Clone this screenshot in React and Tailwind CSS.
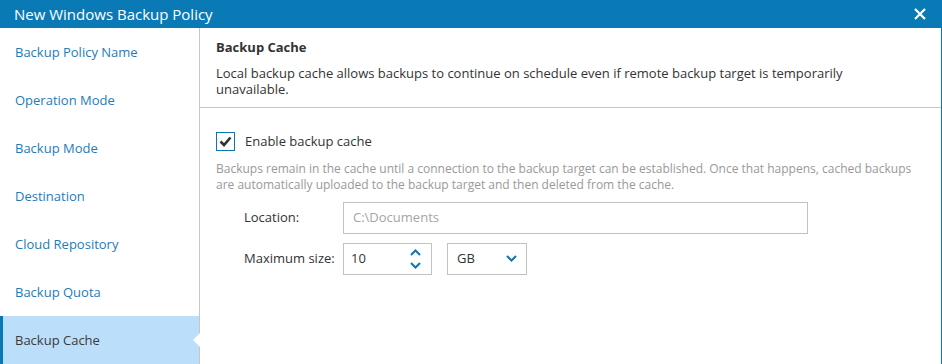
import { useState } from 'react'

const steps = [
  'Backup Policy Name',
  'Operation Mode',
  'Backup Mode',
  'Destination',
  'Cloud Repository',
  'Backup Quota',
  'Backup Cache',
]

function Sidebar({ active }) {
  return (
    <div className="w-[200px] shrink-0 border-r border-[#c6c6c6]">
      {steps.map((s) => {
        const on = s === active
        return (
          <div
            key={s}
            className={
              on
                ? 'relative flex h-12 items-center border-l-[3px] border-[#0a78b2] bg-[#bbdffb] pl-3 pt-[2px] text-[#3a3a3a]'
                : 'flex h-12 items-center pl-[15px] pt-[2px] text-[#1f7bb8]'
            }
          >
            {s}
            {on && (
              <span className="absolute right-[-1px] top-1/2 h-0 w-0 -translate-y-1/2 border-y-[7px] border-r-[7px] border-y-transparent border-r-white" />
            )}
          </div>
        )
      })}
    </div>
  )
}

function Checkbox({ checked, onChange }) {
  return (
    <button
      onClick={onChange}
      className="flex h-[19px] w-[19px] items-center justify-center border border-[#0a78b2] bg-white"
    >
      {checked && (
        <svg width="13" height="11" viewBox="0 0 13 11">
          <path d="M1.5 5.5 L5 9 L11.5 1.5" fill="none" stroke="#333" strokeWidth="2.6" />
        </svg>
      )}
    </button>
  )
}

export default function App() {
  const [enabled, setEnabled] = useState(true)

  return (
    <div
      className="flex h-[364px] w-[942px] flex-col overflow-hidden bg-white text-[13px]"
      style={{ fontFamily: '"Open Sans", "Liberation Sans", sans-serif' }}
    >
      <div className="flex h-[28px] shrink-0 items-center justify-between bg-[#0a7ab6] pl-[14px] pr-[16px] text-white">
        <span className="text-[15px]">New Windows Backup Policy</span>
        <svg width="12" height="12" viewBox="0 0 12 12">
          <path d="M1 1 L11 11 M11 1 L1 11" stroke="#fff" strokeWidth="2.2" />
        </svg>
      </div>

      <div className="flex flex-1 border-r border-[#0a7ab6]">
        <Sidebar active="Backup Cache" />

        <div className="flex-1">
          <div className="border-b border-[#c6c6c6] pb-[10px] pl-4 pr-[30px] pt-[10px] text-[#333]">
            <h2 className="font-bold leading-[18px]">Backup Cache</h2>
            <p className="mt-[9px] leading-[16px]">
              Local backup cache allows backups to continue on schedule even if remote backup target is temporarily
              unavailable.
            </p>
          </div>

          <div className="px-4 pt-[24px]">
            <label className="flex items-center gap-[10px] text-[#333]">
              <Checkbox checked={enabled} onChange={() => setEnabled(!enabled)} />
              Enable backup cache
            </label>
            <p className="mt-[9px] text-[12px] leading-[16px] text-[#999]">
              Backups remain in the cache until a connection to the backup target can be established. Once that happens,
              cached backups are automatically uploaded to the backup target and then deleted from the cache.
            </p>

            <div className="mt-[9px] pl-[28px] text-[#333]">
              <div className="flex items-center">
                <span className="w-[99px]">Location:</span>
                <div className="flex h-[32px] w-[465px] items-center border border-[#c2c2c2] px-[9px] text-[#a5a5a5]">
                  C:\Documents
                </div>
              </div>
              <div className="mt-[9px] flex items-center">
                <span className="w-[99px]">Maximum size:</span>
                <div className="flex h-[32px] w-[89px] items-center justify-between border border-[#c2c2c2] pl-[7px] pr-[10px]">
                  <span>10</span>
                  <div className="flex flex-col gap-[6px]">
                    <svg width="11" height="7" viewBox="0 0 11 7">
                      <path d="M1 6 L5.5 1.5 L10 6" fill="none" stroke="#0a78b2" strokeWidth="2" />
                    </svg>
                    <svg width="11" height="7" viewBox="0 0 11 7">
                      <path d="M1 1 L5.5 5.5 L10 1" fill="none" stroke="#0a78b2" strokeWidth="2" />
                    </svg>
                  </div>
                </div>
                <div className="ml-[15px] flex h-[32px] w-[80px] items-center justify-between border border-[#c2c2c2] pl-[9px] pr-[9px]">
                  <span>GB</span>
                  <svg width="11" height="7" viewBox="0 0 11 7">
                    <path d="M1 1 L5.5 5.5 L10 1" fill="none" stroke="#0a78b2" strokeWidth="2" />
                  </svg>
                </div>
              </div>
            </div>
          </div>
        </div>
      </div>
    </div>
  )
}
